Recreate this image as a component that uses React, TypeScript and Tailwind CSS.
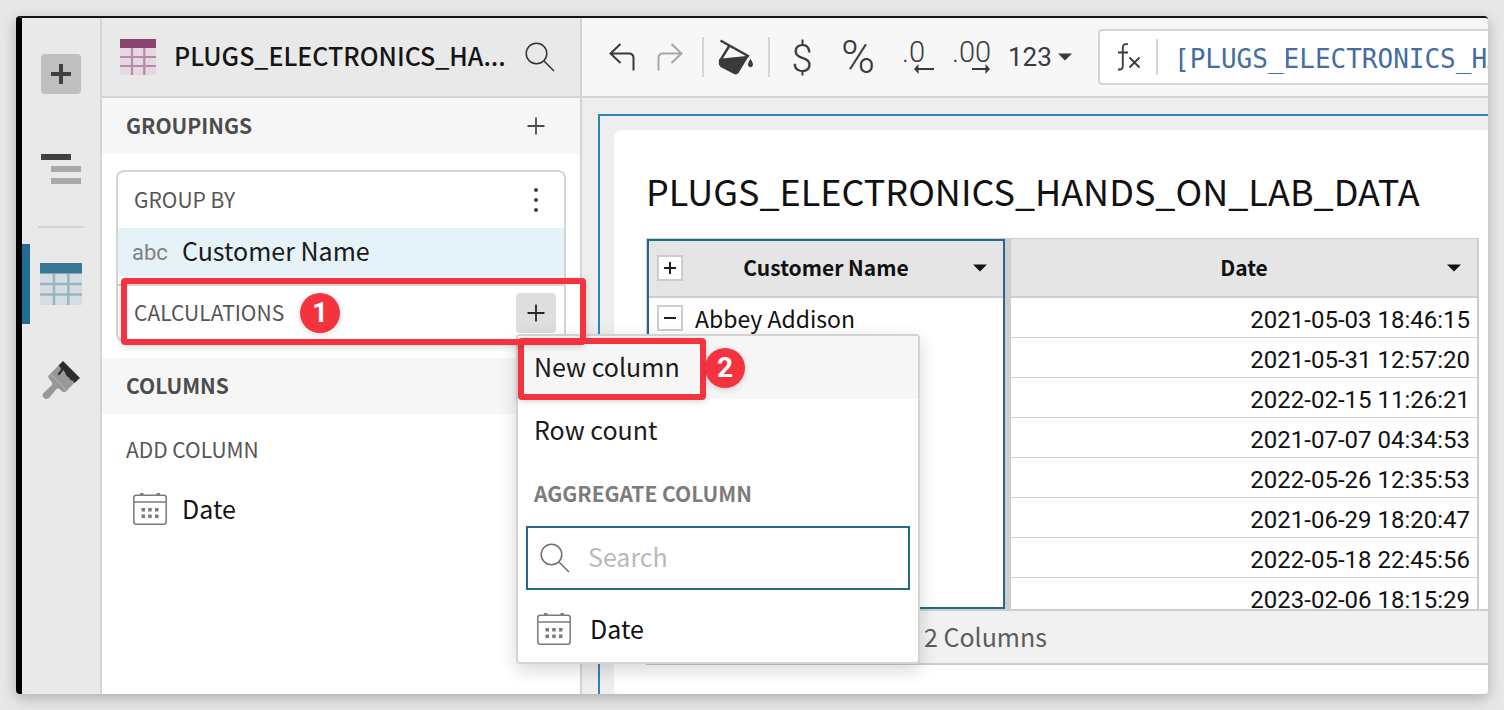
import React from "react";

const SANS = "font-['Noto_Sans_CJK_JP','Noto_Sans',sans-serif]";

const dates = [
  "2021-05-03 18:46:15",
  "2021-05-31 12:57:20",
  "2022-02-15 11:26:21",
  "2021-07-07 04:34:53",
  "2022-05-26 12:35:53",
  "2021-06-29 18:20:47",
  "2022-05-18 22:45:56",
  "2023-02-06 18:15:29",
];

function SearchIcon({ className }: { className: string }) {
  return (
    <svg width="30" height="30" viewBox="0 0 30 30" fill="none" stroke="currentColor" strokeWidth="1.5" className={className} aria-hidden="true">
      <circle cx="11.5" cy="11.5" r="10.3" />
      <path d="M19 19 L29 29" />
    </svg>
  );
}

function PlusIcon() {
  return (
    <svg width="18" height="18" viewBox="0 0 18 18" fill="none" stroke="currentColor" strokeWidth="1.8" aria-hidden="true">
      <path d="M9 0.5V17.5M0.5 9H17.5" />
    </svg>
  );
}

function CalendarIcon() {
  return (
    <svg width="34" height="34" viewBox="0 0 34 34" fill="none" stroke="#7b7b7b" strokeWidth="1.5" className="shrink-0" aria-hidden="true">
      <rect x="0.8" y="2.2" width="32.4" height="29" rx="2.5" />
      <path d="M0.8 9H33.2" />
      <path d="M7 1.2H10.5M23.5 1.2H27" strokeWidth="2.6" />
      <path d="M8.5 16.7H12M15.2 16.7H18.7M22 16.7H25.5M8.5 23.3H12M15.2 23.3H18.7M22 23.3H25.5" strokeWidth="3.4" />
    </svg>
  );
}

function TableIcon({ size, head, line, fill }: { size: number; head: string; line: string; fill: string }) {
  return (
    <svg width={size} height={size} viewBox="0 0 36 36" className="shrink-0" aria-hidden="true">
      <rect width="36" height="36" fill={fill} />
      <path d="M12 9V36M24.3 9V36M0 18H36M0 27H36" stroke={line} strokeWidth="2.2" fill="none" />
      <rect width="36" height="9" fill={head} />
    </svg>
  );
}

function Caret() {
  return (
    <svg width="14" height="8" viewBox="0 0 14 8" className="shrink-0" aria-hidden="true">
      <path d="M0 0.5H14L7 7.5Z" fill="currentColor" />
    </svg>
  );
}

function ExpandBox({ open }: { open: boolean }) {
  return (
    <button aria-label={open ? "Collapse" : "Expand"} className="flex size-[26px] shrink-0 items-center justify-center border-2 border-[#cdcdcd] bg-white">
      <svg width="12" height="12" viewBox="0 0 12 12" stroke="#1f1f1f" strokeWidth="2" aria-hidden="true">
        <path d={open ? "M0 6H12" : "M0 6H12M6 0V12"} />
      </svg>
    </button>
  );
}

function Badge({ children }: { children: React.ReactNode }) {
  return (
    <span className="flex size-10 items-center justify-center rounded-full bg-[#f5333f] font-[Roboto,sans-serif] text-[28px] leading-none font-bold text-white shadow-[0_2px_6px_rgba(0,0,0,0.15)]">
      {children}
    </span>
  );
}

function Rail() {
  return (
    <nav aria-label="Editor" className="flex w-20 shrink-0 flex-col items-center border-r-2 border-[#d5d5d5] bg-[#e9e9e9] pt-9">
      <button aria-label="Add element" className="flex size-10 items-center justify-center rounded bg-[#bfbfbf]">
        <svg width="20" height="20" viewBox="0 0 20 20" stroke="#404040" strokeWidth="4" aria-hidden="true">
          <path d="M10 0V20M0 10H20" />
        </svg>
      </button>
      <button aria-label="Outline" className="mt-[35px] flex h-20 w-full items-center justify-center">
        <svg width="40" height="30" viewBox="0 0 40 30" aria-hidden="true">
          <rect width="30" height="6" fill="#404040" />
          <rect x="10" y="12" width="30" height="6" fill="#aaa" />
          <rect x="10" y="24" width="30" height="6" fill="#aaa" />
        </svg>
      </button>
      <hr className="mt-[17px] w-[46px] border-t-2 border-[#d5d5d5]" />
      <button aria-label="Data" className="mt-4 flex h-20 w-full items-center justify-center border-l-8 border-[#246c8f] pr-2">
        <TableIcon size={42} head="#3a7796" line="#9ab5c3" fill="#d6dde2" />
      </button>
      <button aria-label="Format" className="mt-4 flex h-20 w-full items-center justify-center">
        <svg width="40" height="40" viewBox="0 0 40 40" aria-hidden="true">
          <path d="M17.500 5.500 L7.500 15.500 Q6.500 17 8 18.500 L11 22.500 Q12 24 10.500 25.500 L2.500 33 Q0.500 36 3 38.200 Q6 40 8.500 37.500 L15.500 29 Q17 28 18.500 29 L20.500 31 Q22.500 33 25 31.500 L36 20 Z" fill="#989898" />
          <path d="M22 1 L39 18 L33.500 23 L31.500 20.500 L29.500 20 L28 17.500 L26 16.500 L24 12.500 L22.500 10 L18 15.500 L16.500 14 L20 9.500 L19.500 7.500 L17.500 5.500 Z" fill="#2d2d2d" />
          <path d="M10 14.500 L25.500 30" stroke="#c2c2c2" strokeWidth="0.8" />
        </svg>
      </button>
    </nav>
  );
}

function ColumnMenu() {
  return (
    <div role="menu" className="absolute top-full left-0 z-20 mt-px w-[404px] rounded border-2 border-[#d3d3d3] bg-white text-left shadow-[0_6px_18px_rgba(0,0,0,0.16)]">
      <div className="relative">
        <button role="menuitem" className="block h-[63px] w-full bg-[#f6f6f6] px-4 pb-1 text-left text-[25px] leading-8 text-[#1a1a1a]">
          New column
        </button>
        <div className="pointer-events-none absolute top-0.5 left-0 h-[62px] w-[188px] rounded-sm border-[6px] border-[#f5333f] shadow-[0_2px_6px_rgba(0,0,0,0.15)]" />
        <div className="absolute top-3 left-[187px]">
          <Badge>2</Badge>
        </div>
      </div>
      <button role="menuitem" className="block h-[63px] w-full px-4 pb-1 text-left text-[25px] leading-8 text-[#1a1a1a]">
        Row count
      </button>
      <div className="flex h-16 items-center px-4 pb-0.5 text-[21px] leading-8 font-bold text-[#7c7c7c]">AGGREGATE COLUMN</div>
      <label className="mx-2 flex h-16 items-center gap-[18px] border-2 border-[#226b8e] bg-white px-3">
        <SearchIcon className="shrink-0 text-[#6f6f6f]" />
        <input aria-label="Search columns" placeholder="Search" className="h-11 w-full min-w-0 pb-1 text-[25px] leading-10 outline-none placeholder:text-[#b9b9b9]" />
      </label>
      <button role="menuitem" className="mt-2 flex h-16 w-full items-center gap-[19px] px-[19px] text-[25px] leading-8 text-[#111]">
        <CalendarIcon />
        <span className="pb-1">Date</span>
      </button>
    </div>
  );
}

function SidePanel() {
  return (
    <aside className="relative z-10 flex w-[480px] shrink-0 flex-col border-r-2 border-[#d5d5d5] bg-white">
      <header className="flex h-20 shrink-0 items-center border-b-2 border-[#d5d5d5] bg-[#e9e9e9] pr-[25px] pl-[18px]">
        <TableIcon size={36} head="#8a4470" line="#b78aa7" fill="#e6d8e1" />
        <h2 className="ml-[18px] min-w-0 flex-1 pb-1 text-[25px] leading-9 font-medium whitespace-nowrap text-[#151515]">PLUGS_ELECTRONICS_HA...</h2>
        <button aria-label="Search columns">
          <SearchIcon className="text-[#333]" />
        </button>
      </header>
      <div className="flex h-14 shrink-0 items-center justify-between bg-[#f6f6f6] pr-[35px] pl-6">
        <h3 className="pb-0.5 text-[21px] leading-8 font-bold text-[#4c4c4c]">GROUPINGS</h3>
        <button aria-label="Add grouping" className="text-[#4c4c4c]">
          <PlusIcon />
        </button>
      </div>
      <section className="mx-3.5 mt-4 rounded-lg border-2 border-[#d5d5d5]">
        <div className="flex h-14 items-center justify-between pr-6 pl-4">
          <span className="pb-0.5 text-[21px] leading-8 text-[#555]">GROUP BY</span>
          <button aria-label="Grouping options">
            <svg width="8" height="26" viewBox="0 0 8 26" fill="#404040" aria-hidden="true">
              <circle cx="4" cy="3" r="2" />
              <circle cx="4" cy="13" r="2" />
              <circle cx="4" cy="23" r="2" />
            </svg>
          </button>
        </div>
        <div className="flex h-12 items-center bg-[#e5f2f8] pl-3.5">
          <span className="w-[50px] font-[Roboto,sans-serif] text-[22px] text-[#808080]">abc</span>
          <span className="pb-1 text-[25px] leading-8 text-[#1a1a1a]">Customer Name</span>
        </div>
        <div className="relative mt-2 flex h-14 items-center border-t-2 border-[#d5d5d5] pr-2 pl-4">
          <span className="mr-4 pb-0.5 text-[21px] leading-8 text-[#555]">CALCULATIONS</span>
          <Badge>1</Badge>
          <div className="pointer-events-none absolute -top-2 -right-[22px] -bottom-[5px] left-[3px] z-30 rounded-sm border-[6px] border-[#f5333f] shadow-[0_2px_6px_rgba(0,0,0,0.15)]" />
          <div className="relative ml-auto">
            <button aria-label="Add calculation" className="flex size-10 items-center justify-center rounded bg-[#dedede] text-[#262626]">
              <PlusIcon />
            </button>
            <ColumnMenu />
          </div>
        </div>
      </section>
      <div className="mt-4 flex h-14 shrink-0 items-center bg-[#f6f6f6] pl-6">
        <h3 className="pb-0.5 text-[21px] leading-8 font-bold text-[#4c4c4c]">COLUMNS</h3>
      </div>
      <div className="flex h-[72px] items-center pb-0.5 pl-6 text-[21px] leading-8 text-[#555]">ADD COLUMN</div>
      <button className="flex h-12 items-center gap-[15px] pl-[31px] text-[25px] leading-8 text-[#151515]">
        <CalendarIcon />
        <span className="pb-1">Date</span>
      </button>
    </aside>
  );
}

function Toolbar() {
  return (
    <div className="flex h-20 shrink-0 items-center border-b-2 border-[#d5d5d5] bg-[#f7f7f7] pl-4 font-[Roboto,sans-serif] text-[#3a3a3a]">
      <button aria-label="Undo" className="flex w-12 shrink-0 justify-center">
        <svg width="26" height="28" viewBox="0 0 26 28" fill="none" stroke="#3a3a3a" strokeWidth="2" aria-hidden="true">
          <path d="M11.500 1 L1.500 10.500 L11.500 20 M1.500 10.500 H20 Q24.500 10.500 24.500 15 V27.500" />
        </svg>
      </button>
      <button aria-label="Redo" className="flex w-12 shrink-0 justify-center">
        <svg width="26" height="28" viewBox="0 0 26 28" fill="none" stroke="#a6a6a6" strokeWidth="2" aria-hidden="true">
          <path d="M14.500 1 L24.500 10.500 L14.500 20 M24.500 10.500 H6 Q1.500 10.500 1.500 15 V27.500" />
        </svg>
      </button>
      <div className="mx-2 h-10 w-0.5 shrink-0 bg-[#d5d5d5]" />
      <button aria-label="Fill color" className="flex w-12 shrink-0 justify-center">
        <svg width="36" height="36" viewBox="0 0 36 36" aria-hidden="true">
          <path d="M2.500 1.500 L31 17.500 M11.500 6.500 L2 22" stroke="#3a3a3a" strokeWidth="2.4" fill="none" />
          <path d="M1.500 19.800 L31 16.800 L20.500 34 Q18.500 36.500 15 34.500 L2.500 28 Q-0.500 26 1.500 19.800 Z" fill="#3a3a3a" />
          <path d="M32.500 20.500 Q36.500 27.500 32.500 27.800 Q28.500 27.500 32.500 20.500Z" fill="#3a3a3a" stroke="#3a3a3a" />
        </svg>
      </button>
      <div className="mx-2 h-10 w-0.5 shrink-0 bg-[#d5d5d5]" />
      <button className="w-12 shrink-0 pt-1 text-[38px] leading-10 font-light">$</button>
      <button className="w-16 shrink-0 text-[46px] leading-10 font-light">%</button>
      <button aria-label="Decrease decimals" className="flex w-14 shrink-0 flex-col items-start pl-3 text-[29px] leading-6 font-light">
        .0
        <svg width="20" height="10" viewBox="0 0 20 10" className="ml-3" fill="#3a3a3a" aria-hidden="true">
          <path d="M0 5L4.500 0V4H20V6H4.500V10Z" />
        </svg>
      </button>
      <button aria-label="Increase decimals" className="flex w-14 shrink-0 flex-col items-start pl-1.5 text-[29px] leading-6 font-light">
        .00
        <svg width="18" height="10" viewBox="0 0 18 10" className="ml-5" fill="#3a3a3a" aria-hidden="true">
          <path d="M18 5L13.500 0V4H0V6H13.500V10Z" />
        </svg>
      </button>
      <button className="flex w-20 shrink-0 items-center gap-1.5 pl-1.5 text-[26px] leading-8">
        123
        <Caret />
      </button>
      <label className="ml-4 flex h-14 min-w-0 flex-1 items-center rounded-l border-y-2 border-l-2 border-[#d5d5d5] bg-white pl-[17px]">
        <svg width="24" height="28" viewBox="0 0 24 28" fill="none" stroke="#3a3a3a" strokeWidth="1.8" className="shrink-0" aria-hidden="true">
          <path d="M11 1.200 H9 Q5.800 1.200 5.800 5 V22.500 Q5.800 26.500 3 26.500 H1 M1 9.500H11 M12.500 14.500L22.500 24.500M22.500 14.500L12.500 24.500" />
        </svg>
        <span className="mr-4 ml-[15px] h-9 w-0.5 shrink-0 bg-[#d5d5d5]" />
        <input
          aria-label="Formula"
          defaultValue="[PLUGS_ELECTRONICS_HANDS_ON_LAB_DATA]"
          className="h-10 w-full min-w-0 pt-1 font-['DejaVu_Sans_Mono',monospace] text-[26px] text-[#456d9f] outline-none"
        />
      </label>
    </div>
  );
}

function DataTable() {
  return (
    <div className="relative mr-[9px] min-h-0 flex-1 overflow-hidden border-t border-r-2 border-l border-[#cdcdcd]">
      <table className="w-full table-fixed border-separate border-spacing-0 text-[#111]">
        <colgroup>
          <col className="w-[364px]" />
          <col />
        </colgroup>
        <thead>
          <tr className="h-[59px] text-[21px] leading-8">
            <th className="border-r-[6px] border-b-2 border-[#cdcdcd] bg-[#e5e5e5] p-0 font-bold">
              <div className="flex items-center pr-[18px] pl-2.5">
                <ExpandBox open={false} />
                <span className="flex-1 pr-1 pb-0.5">Customer Name</span>
                <Caret />
              </div>
            </th>
            <th className="border-b-2 border-[#cdcdcd] bg-[#e5e5e5] p-0 font-bold">
              <div className="flex items-center pr-4 pl-[30px]">
                <span className="flex-1 pb-0.5">Date</span>
                <Caret />
              </div>
            </th>
          </tr>
        </thead>
        <tbody>
          {dates.map((d, i) => (
            <tr key={d} className="h-10">
              {i === 0 && (
                <td rowSpan={dates.length} className="border-r-[6px] border-[#cdcdcd] p-0 pt-1 align-top text-[23px]">
                  <div className="flex items-center gap-3 pl-2.5 leading-8">
                    <ExpandBox open />
                    Abbey Addison
                  </div>
                </td>
              )}
              <td className="border-b border-[#cdcdcd] p-0 pr-[7px] pt-1 text-right font-[Roboto,sans-serif] text-[24px] leading-8">{d}</td>
            </tr>
          ))}
        </tbody>
      </table>
      <div className="pointer-events-none absolute inset-y-0 left-0 w-[358px] border-2 border-[#226b8e]" />
    </div>
  );
}

export default function App() {
  return (
    <div className={`flex h-screen bg-[#e7e7e7] p-4 ${SANS}`}>
      <div className="flex min-w-0 flex-1 overflow-hidden rounded border-t-2 border-l-[6px] border-t-[#141414] border-l-black bg-white shadow-[0_4px_14px_rgba(0,0,0,0.25)]">
        <Rail />
        <SidePanel />
        <div className="flex min-w-0 flex-1 flex-col overflow-hidden">
          <Toolbar />
          <main className="flex min-h-0 flex-1 bg-[#eee] pt-4 pl-4">
            <div className="flex min-w-0 flex-1 border-t-2 border-l-2 border-[#2b87b8] pt-3.5 pl-3.5">
              <section className="flex min-w-0 flex-1 flex-col rounded-tl-lg rounded-bl-sm bg-white pb-[29px] pl-8">
                <h1 className="flex h-[108px] shrink-0 items-center pt-3 text-[36px] leading-[48px] whitespace-nowrap text-[#111]">
                  PLUGS_ELECTRONICS_HANDS_ON_LAB_DATA
                </h1>
                <DataTable />
                <footer className="flex h-14 shrink-0 items-center border-y-2 border-[#cdcdcd] bg-[#f1f1f1] pb-0.5 pl-[278px] text-[25px] leading-8 text-[#5c5c5c]">
                  2 Columns
                </footer>
              </section>
            </div>
          </main>
        </div>
      </div>
    </div>
  );
}
